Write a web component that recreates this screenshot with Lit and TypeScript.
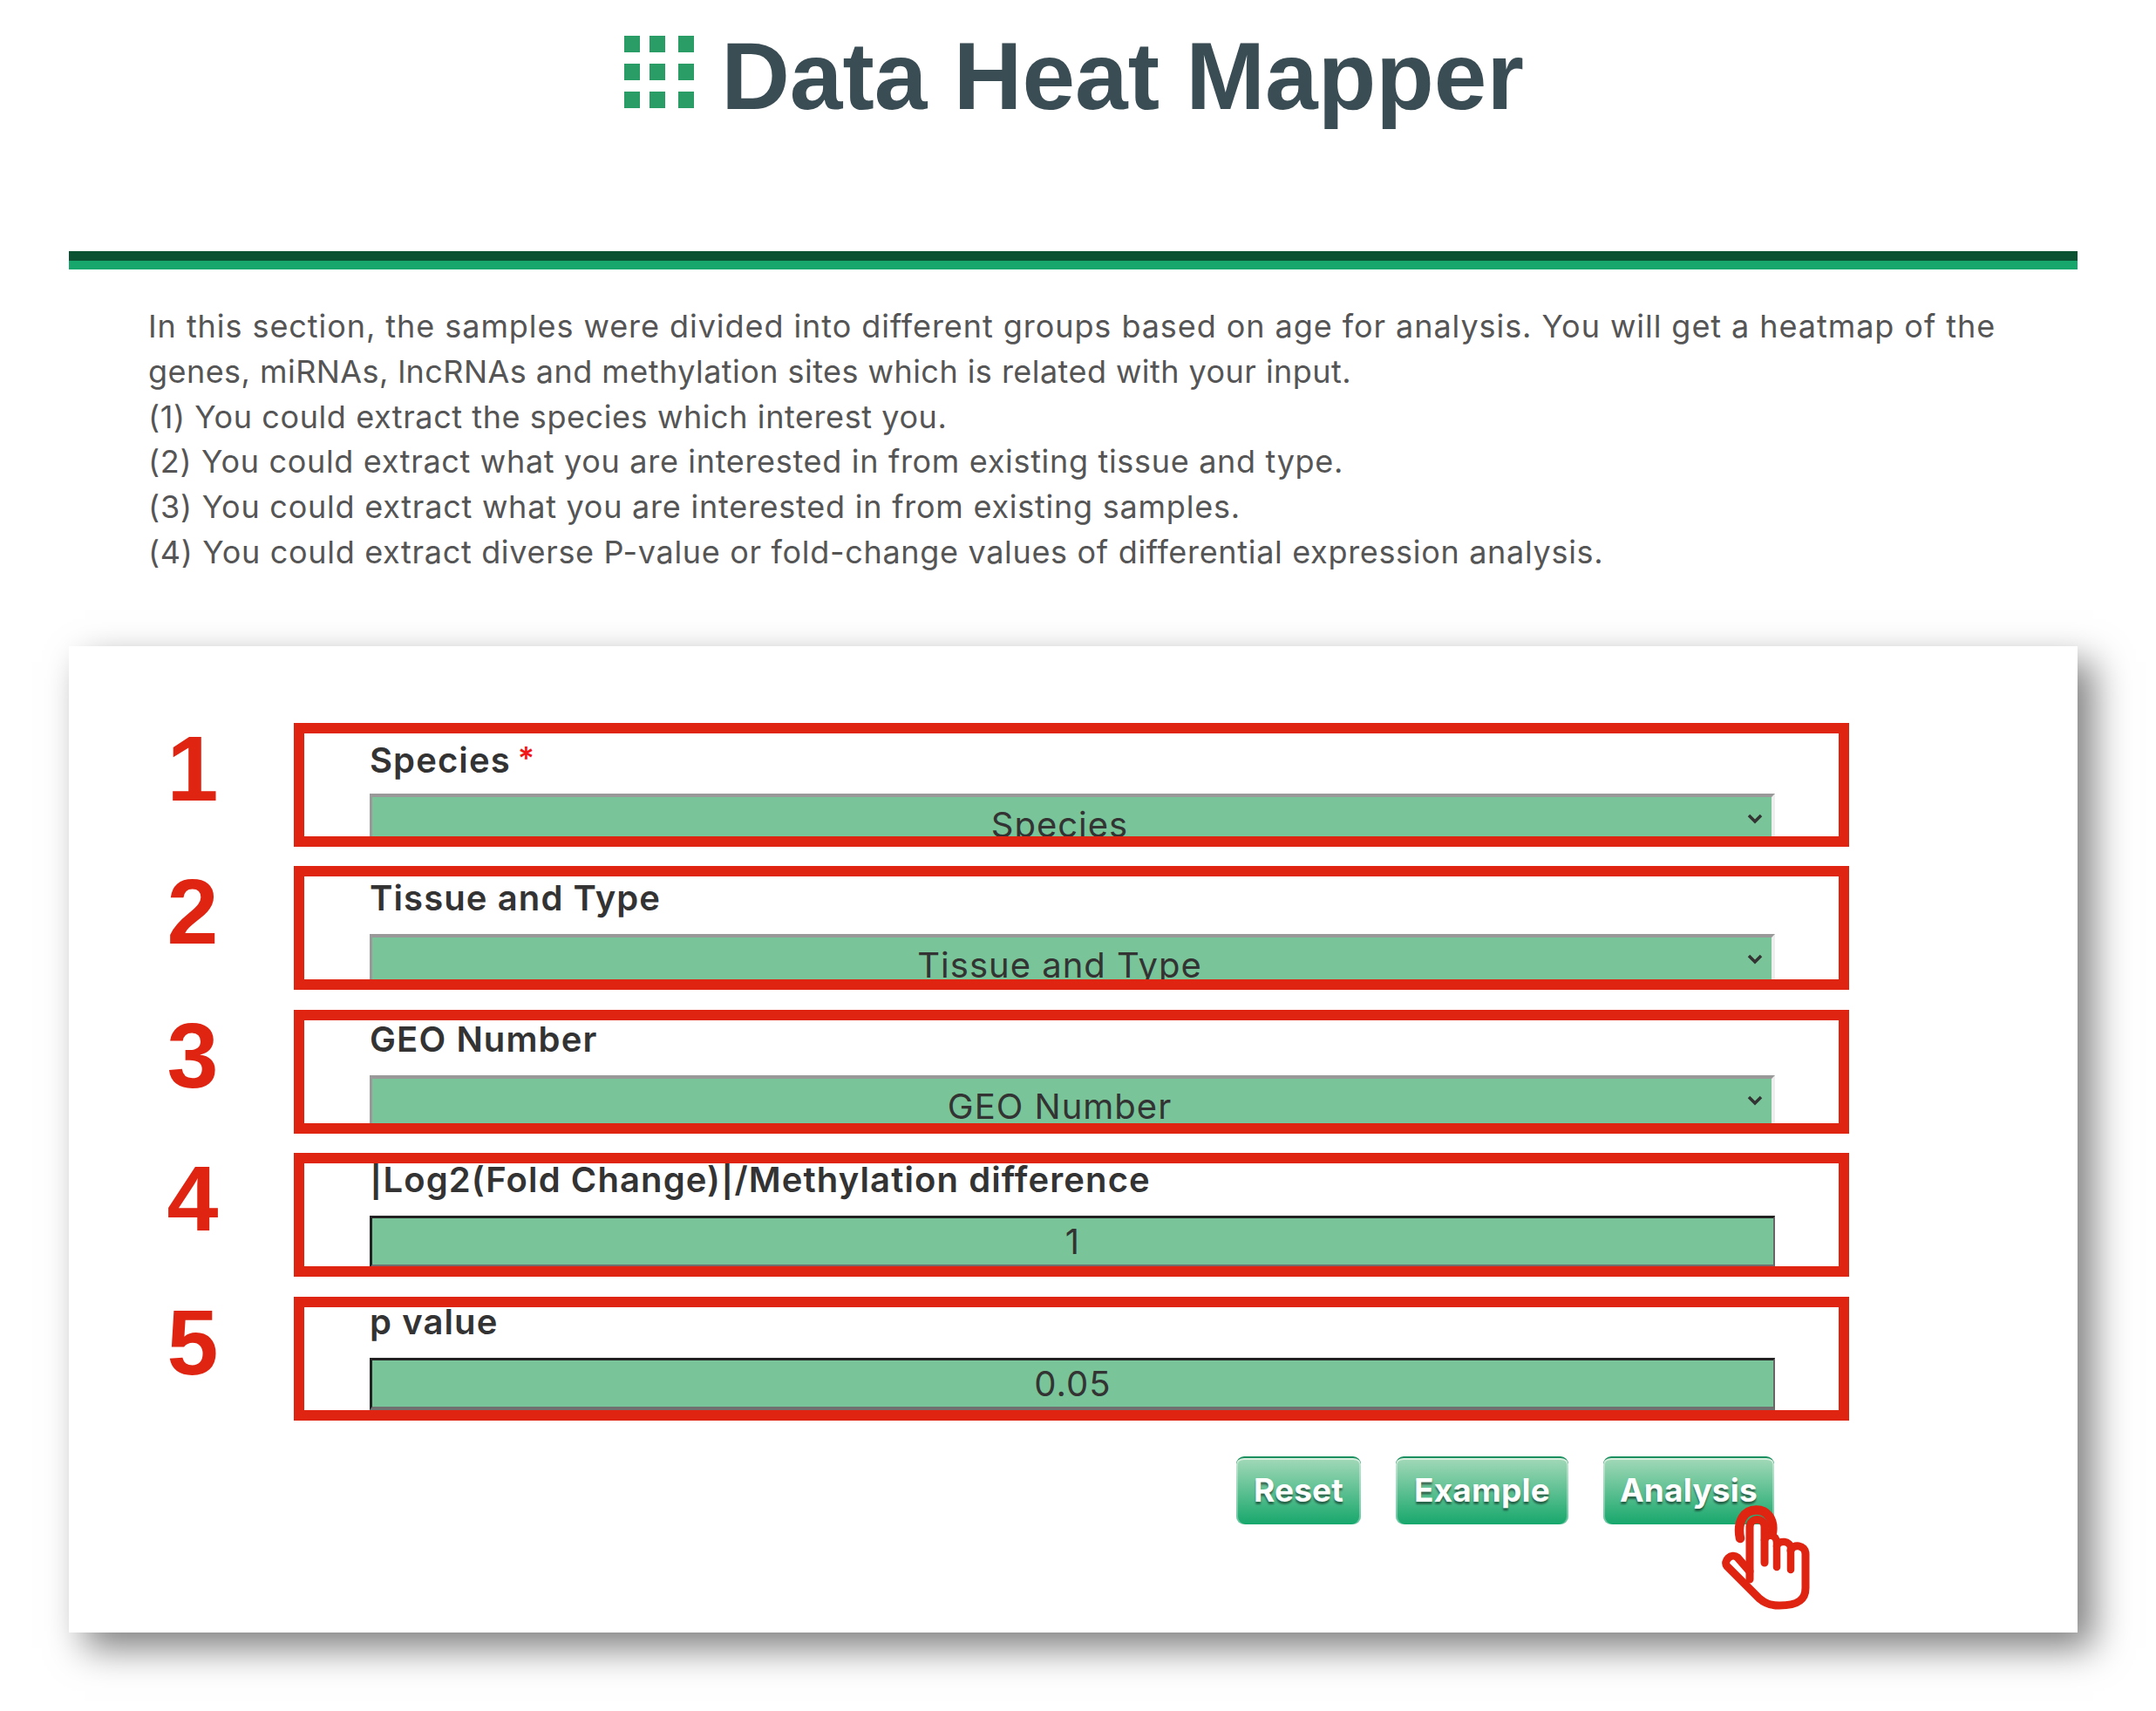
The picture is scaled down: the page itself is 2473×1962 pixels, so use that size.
import { LitElement, html, css } from "lit";
import { customElement } from "lit/decorators.js";

interface Field { label: string; req?: boolean; kind: "select" | "input"; value: string; top: number; }

const FIELDS: Field[] = [
  { label: "Species", req: true, kind: "select", value: "Species", top: 6 },
  { label: "Tissue and Type", kind: "select", value: "Tissue and Type", top: 3 },
  { label: "GEO Number", kind: "select", value: "GEO Number", top: 0 },
  { label: "|Log2(Fold Change)|/Methylation difference", kind: "input", value: "1", top: -3 },
  { label: "p value", kind: "input", value: "0.05", top: -5 },
];

const LINES: [string, number][] = [
  ["In this section, the samples were divided into different groups based on age for analysis. You will get a heatmap of the", 0.94],
  ["genes, miRNAs, lncRNAs and methylation sites which is related with your input.", 0.45],
  ["(1) You could extract the species which interest you.", 0.58],
  ["(2) You could extract what you are interested in from existing tissue and type.", 0.68],
  ["(3) You could extract what you are interested in from existing samples.", 0.76],
  ["(4) You could extract diverse P-value or fold-change values of differential expression analysis.", 0.68],
];

@customElement("app-root")
export class AppRoot extends LitElement {
  static styles = css`
    :host { display: block; background: #fff; min-height: 1962px; font-family: "Inter", "Liberation Sans", sans-serif; }
    .page { width: 2304px; margin-left: 79px; }
    .head { height: 288px; display: flex; justify-content: center; align-items: flex-start; gap: 31px; padding-left: 2px; box-sizing: border-box; }
    .logo { margin-top: 41px; display: block; }
    .title { font: 700 109px/1 "Liberation Sans", Arial, sans-serif; color: #3a4c54; margin-top: 33px; }
    .rule { height: 11px; background: #0b5233; border-bottom: 10px solid #17a76c; }
    .intro { margin: 40px 0 81px 91px; font-size: 36px; line-height: 51.8px; color: #555; white-space: nowrap; }
    .intro div { height: 51.8px; }
    .card { background: #fff; box-shadow: 18px 18px 40px rgba(0,0,0,.5); padding: 88px 262px 124px 0; }
    .rows { display: flex; flex-direction: column; gap: 22.5px; }
    .row { display: flex; }
    .num { width: 258px; flex: none; text-align: center; padding-left: 26px; box-sizing: border-box; }
    .num span { display: block; width: 232px; margin-top: -1px; font: 700 106px/1 "Liberation Sans", Arial, sans-serif; color: #df2412; }
    .box { flex: 1; height: 142px; box-sizing: border-box; border: 12px solid #df2412; overflow: hidden; padding-left: 75px; }
    .label { height: 50px; line-height: 44px; margin-bottom: 13px; font-size: 40px; letter-spacing: 1.1px; font-weight: 600; color: #333; white-space: nowrap; }
    .label i { font-style: normal; color: #f01818; font-size: 36px; vertical-align: 4px; margin-left: 8px; }
    .ctl { width: 1612px; height: 60px; box-sizing: border-box; background: #79c498; color: #333; font-size: 40px; letter-spacing: 1px; position: relative; text-align: center; white-space: nowrap; }
    .select { border-top: 4px solid #999; border-left: 3px solid #999; border-right: 4px solid #eee; padding-right: 28px; line-height: 64px; }
    .input { border-top: 3px solid #222; border-left: 3px solid #222; border-right: 2px solid #666; border-bottom: 4px solid #707070; line-height: 53px; }
    .chev { position: absolute; right: 10px; top: 19px; display: block; }
    .actions { display: flex; justify-content: flex-end; gap: 40px; margin-top: 41px; padding-right: 86px; position: relative; }
    .btn { height: 78px; box-sizing: border-box; border-radius: 9px; border-top: 2px solid #1b8f5f;
      box-shadow: inset 0 2px 0 #d8efe0, inset 2px 0 0 rgba(255,255,255,.35), inset -2px 0 0 rgba(255,255,255,.35);
      background: linear-gradient(#a3d9b8, #17a76c); color: #fff; font-size: 37px; letter-spacing: .2px; font-weight: 700;
      text-shadow: 0 3px 2px rgba(0,0,0,.45); text-align: center; line-height: 74px; }
    .hand { position: absolute; left: 1896px; top: 56px; display: block; }
  `;

  render() {
    return html`<div class="page">
      <header class="head">
        <svg class="logo" width="80" height="83" viewBox="0 0 80 83">
          ${[0, 32, 64].map((y) => [0, 29, 62].map((x) => html`<svg x=${x} y=${y} width="18" height="19"><rect width="18" height="19" fill="#2a9d67"></rect></svg>`))}
        </svg>
        <div class="title">Data Heat Mapper</div>
      </header>
      <div class="rule"></div>
      <div class="intro">${LINES.map(([l, s]) => html`<div style="letter-spacing:${s}px">${l}</div>`)}</div>
      <section class="card">
        <div class="rows">
          ${FIELDS.map((f, i) => html`<div class="row">
            <div class="num"><span>${i + 1}</span></div>
            <div class="box">
              <div style="margin-top:${f.top}px">
                <div class="label">${f.label}${f.req ? html`<i>*</i>` : ""}</div>
                ${f.kind === "select"
                  ? html`<div class="ctl select">${f.value}
                      <svg class="chev" width="18" height="12" viewBox="0 0 18 12"><path d="M2 2l7 7 7-7" fill="none" stroke="#333" stroke-width="3.5"></path></svg>
                    </div>`
                  : html`<div class="ctl input">${f.value}</div>`}
              </div>
            </div>
          </div>`)}
        </div>
        <div class="actions">
          <div class="btn" style="width:143px">Reset</div>
          <div class="btn" style="width:198px">Example</div>
          <div class="btn" style="width:196px">Analysis</div>
          <svg class="hand" width="101" height="120" viewBox="0 0 101 120" fill="none" stroke="#df2412" stroke-linecap="round" stroke-linejoin="round">
            <path d="M21 38 C17 18 26 5.5 39.5 5.5 C52 5.5 60 16 58 31" stroke-width="10.5"></path>
            <path d="M32 85 V25 A8.5 8.5 0 0 1 49 25 V66" stroke-width="9"></path>
            <path d="M49 40 C51 32 63 33 63 43 V71" stroke-width="8.5"></path>
            <path d="M63 47 C65 39 79 41 79 49 V74" stroke-width="8.5"></path>
            <path d="M79 52 C81 44 96 45 96 56 V95 C96 108 88 115 66 115 C56 115 50 113 43 107 L6 70 C1 64 11 54 18 60 L32 76" stroke-width="9"></path>
          </svg>
        </div>
      </section>
    </div>`;
  }
}
